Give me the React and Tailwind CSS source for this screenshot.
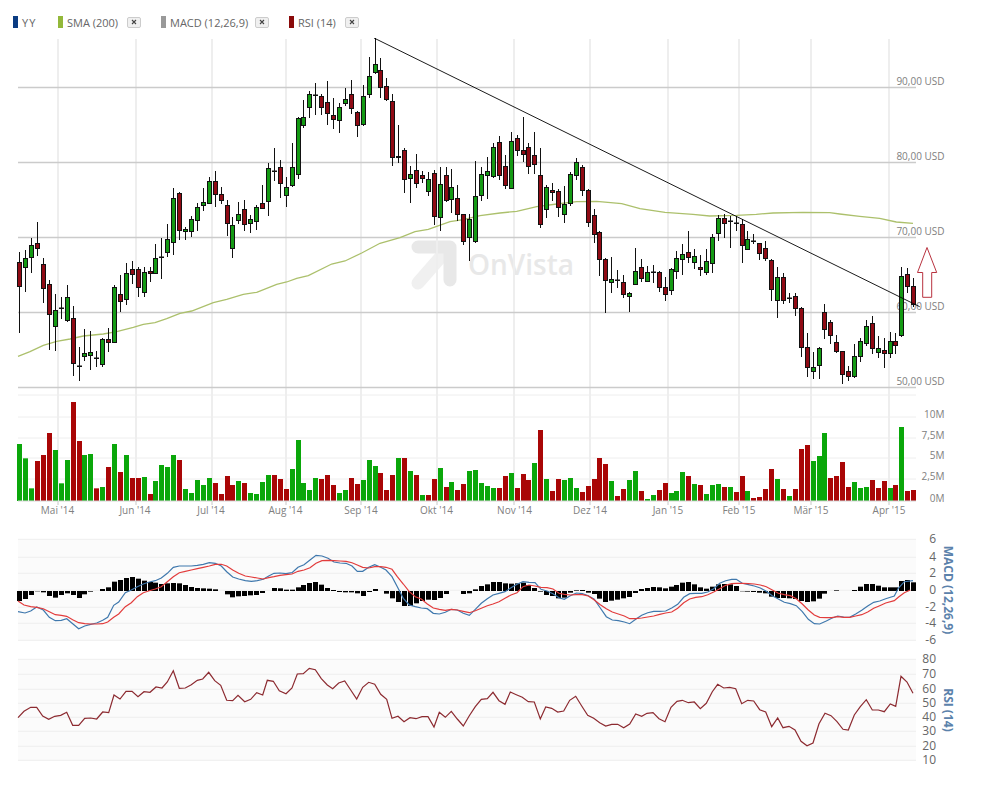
import React from "react";

const FONT = "font-['Open_Sans',sans-serif]";

// high, body top, body bottom, low, colour (pixels on the page)
const candles = [
  [252,262,286,333,"r"],[250,258,267,292,"g"],[238,245,257,273,"g"],[222,243,248,256,"r"],[258,264,288,303,"r"],
  [280,284,314,350,"r"],[294,310,326,351,"g"],[297,308,309,319,"d"],[285,297,320,322,"g"],[306,318,363,376,"r"],
  [347,366,367,381,"d"],[329,353,356,361,"g"],[331,352,355,370,"g"],[351,358,359,367,"d"],[338,339,364,367,"g"],
  [328,339,342,352,"r"],[285,287,342,342,"g"],[275,294,301,312,"r"],[263,273,299,305,"g"],[261,269,274,284,"r"],
  [267,269,287,297,"r"],[267,272,292,297,"g"],[267,271,273,282,"r"],[244,258,273,273,"g"],[238,257,258,279,"d"],
  [224,239,252,257,"g"],[188,198,242,255,"g"],[192,193,230,240,"r"],[227,229,231,240,"g"],[216,219,231,237,"g"],
  [203,207,220,231,"g"],[188,202,205,211,"g"],[177,181,203,203,"g"],[171,181,194,207,"r"],[187,194,200,204,"r"],
  [200,205,223,236,"r"],[217,225,248,258,"g"],[202,214,220,224,"g"],[200,209,224,231,"r"],[215,219,223,233,"g"],
  [205,207,221,230,"g"],[185,203,208,209,"r"],[163,168,201,216,"g"],[148,171,172,181,"d"],[160,167,183,198,"r"],
  [177,187,195,207,"g"],[143,167,185,187,"g"],[117,118,174,179,"g"],[100,117,125,128,"g"],[91,94,107,118,"g"],
  [83,95,96,115,"d"],[94,96,107,115,"r"],[81,102,113,125,"r"],[98,115,119,129,"r"],[103,107,120,133,"g"],
  [88,99,103,106,"g"],[80,94,108,114,"r"],[111,112,125,137,"r"],[85,96,124,126,"g"],[57,76,94,98,"g"],
  [38,64,72,74,"g"],[58,70,87,98,"r"],[78,86,99,101,"r"],[94,101,157,166,"r"],[125,156,157,163,"g"],
  [148,150,179,193,"r"],[166,174,178,203,"g"],[154,170,183,188,"r"],[171,175,178,183,"r"],[172,179,191,196,"g"],
  [170,173,216,225,"r"],[167,184,217,231,"g"],[167,175,200,202,"r"],[169,187,199,213,"g"],[185,198,214,221,"r"],
  [214,214,241,245,"r"],[214,219,237,261,"g"],[161,196,241,243,"g"],[167,174,195,201,"g"],[157,171,175,199,"g"],
  [143,147,176,178,"g"],[136,142,175,180,"r"],[155,166,185,189,"r"],[132,141,188,188,"g"],[135,138,150,156,"r"],
  [117,150,154,162,"r"],[143,147,166,174,"r"],[132,155,164,174,"r"],[148,175,224,228,"r"],[185,187,209,218,"g"],
  [183,190,192,201,"r"],[189,191,207,217,"r"],[186,204,214,223,"g"],[172,174,203,206,"g"],[158,162,175,180,"g"],
  [165,167,190,196,"r"],[189,190,222,227,"r"],[209,215,234,243,"r"],[231,232,259,276,"r"],[258,259,280,313,"r"],
  [257,279,282,293,"g"],[270,280,281,288,"d"],[275,282,294,298,"r"],[292,293,296,312,"g"],[248,271,284,285,"g"],
  [259,267,278,282,"r"],[266,272,281,282,"g"],[265,272,273,283,"d"],[271,272,287,292,"r"],[277,287,294,301,"r"],
  [268,269,290,295,"g"],[251,258,271,279,"g"],[244,254,259,275,"g"],[231,252,257,263,"r"],[249,256,262,269,"g"],
  [255,267,269,276,"r"],[249,261,272,275,"g"],[234,237,263,273,"g"],[215,218,233,241,"g"],[214,218,223,238,"r"],
  [216,221,222,248,"d"],[216,223,224,231,"d"],[219,224,245,263,"r"],[231,239,249,249,"g"],[234,241,242,244,"d"],
  [243,243,253,260,"r"],[241,248,258,261,"r"],[259,260,289,301,"r"],[267,277,300,318,"g"],[273,277,300,304,"r"],
  [293,298,299,303,"d"],[293,296,308,316,"r"],[307,308,347,357,"r"],[333,347,367,377,"r"],[352,367,371,379,"g"],
  [347,348,365,379,"g"],[304,312,329,339,"r"],[320,322,335,344,"r"],[335,342,351,353,"r"],[351,351,374,384,"r"],
  [366,371,376,381,"r"],[344,356,376,378,"g"],[338,341,356,362,"g"],[320,326,343,346,"g"],[316,323,348,354,"r"],
  [336,348,352,358,"g"],[338,350,353,368,"r"],[332,341,353,358,"g"],[333,341,345,354,"r"],[267,276,335,337,"g"],
  [268,274,286,293,"r"],[278,286,304,307,"r"],
];

// volume bar tops, read off a 3x crop: y = 395 + v / 3
const volume = [
  [147,"g"],[190,"g"],[280,"g"],[198,"r"],[180,"r"],[114,"r"],[165,"g"],[265,"g"],[195,"g"],[21,"r"],
  [138,"r"],[180,"g"],[177,"g"],[280,"r"],[276,"g"],[216,"r"],[147,"g"],[231,"r"],[180,"g"],[249,"r"],
  [249,"r"],[246,"g"],[297,"r"],[258,"g"],[210,"g"],[216,"g"],[180,"g"],[195,"r"],[282,"g"],[294,"g"],
  [255,"g"],[270,"g"],[249,"g"],[264,"r"],[297,"r"],[243,"r"],[270,"r"],[258,"g"],[264,"r"],[294,"g"],
  [297,"g"],[261,"g"],[240,"g"],[240,"r"],[252,"r"],[282,"r"],[222,"g"],[135,"g"],[264,"g"],[285,"g"],
  [249,"g"],[252,"r"],[240,"r"],[270,"r"],[294,"g"],[285,"g"],[249,"r"],[267,"r"],[255,"g"],[195,"g"],
  [213,"g"],[234,"r"],[285,"r"],[240,"r"],[189,"g"],[189,"r"],[228,"g"],[240,"r"],[300,"g"],[300,"r"],
  [252,"r"],[219,"g"],[276,"r"],[261,"g"],[285,"r"],[267,"r"],[228,"g"],[225,"g"],[264,"g"],[273,"g"],
  [279,"g"],[279,"r"],[243,"r"],[234,"g"],[279,"r"],[237,"r"],[255,"r"],[204,"g"],[105,"r"],[252,"g"],
  [288,"r"],[252,"r"],[255,"g"],[249,"g"],[279,"g"],[291,"r"],[273,"r"],[252,"r"],[189,"r"],[207,"r"],
  [258,"g"],[303,"r"],[282,"r"],[255,"g"],[228,"g"],[288,"r"],[312,"g"],[300,"g"],[285,"r"],[264,"r"],
  [294,"g"],[288,"g"],[231,"g"],[243,"r"],[267,"g"],[270,"r"],[297,"g"],[270,"g"],[267,"g"],[276,"r"],
  [276,"g"],[291,"r"],[243,"r"],[288,"g"],[309,"r"],[306,"r"],[282,"r"],[222,"r"],[252,"g"],[282,"r"],
  [303,"g"],[282,"r"],[162,"r"],[150,"r"],[198,"g"],[183,"g"],[114,"g"],[249,"r"],[243,"r"],[201,"r"],
  [276,"r"],[261,"g"],[279,"g"],[276,"g"],[255,"r"],[279,"r"],[258,"r"],[279,"g"],[270,"r"],[96,"g"],
  [288,"r"],[285,"r"],
];

// macd histogram, 183 is the zero line of the crop
const histogram = [
  213,207,195,184,187,198,203,195,190,195,204,193,185,183,177,172,155,150,144,141,
  146,152,156,158,162,160,159,160,165,171,174,175,176,178,183,193,202,199,198,196,
  195,189,183,174,175,179,179,172,165,159,156,164,174,180,186,187,187,190,198,186,
  177,183,191,205,216,228,228,220,213,209,210,204,192,183,183,192,190,178,168,163,
  156,156,160,161,160,158,165,174,185,195,198,205,203,188,181,180,188,192,206,216,
  212,209,205,201,189,177,174,171,172,175,170,165,158,156,163,172,176,170,163,162,
  163,168,184,185,186,188,190,200,204,204,205,207,213,216,214,206,191,183,181,183,
  183,180,170,162,162,167,172,172,172,153,150,157,
];

const macdBlue = [[54,245],[75,249],[92,243],[110,231],[130,240],[148,262],[166,272],[184,271],[200,266],[218,281],[236,296],[254,288],[272,283],[290,279],[308,271],[323,262],[341,226],[356,216],[376,188],[394,180],[412,170],[430,162],[448,156],[466,152],[484,144],[502,130],[520,112],[538,108],[556,108],[574,108],[592,106],[610,103],[628,98],[646,100],[664,108],[680,125],[698,141],[716,147],[736,152],[754,154],[772,152],[790,148],[806,138],[822,130],[840,129],[858,131],[876,128],[894,112],[912,104],[930,90],[948,76],[966,78],[984,85],[1002,96],[1020,99],[1038,100],[1056,108],[1072,124],[1088,124],[1106,112],[1124,104],[1142,112],[1158,120],[1176,140],[1192,170],[1210,205],[1228,225],[1246,230],[1264,234],[1282,236],[1300,250],[1318,252],[1336,247],[1354,238],[1372,240],[1390,250],[1408,256],[1426,238],[1444,220],[1462,206],[1479,195],[1497,190],[1515,185],[1533,173],[1551,163],[1569,155],[1587,157],[1605,158],[1623,178],[1641,183],[1659,191],[1677,203],[1693,208],[1711,197],[1729,189],[1747,191],[1765,197],[1783,208],[1801,234],[1819,260],[1837,270],[1855,272],[1873,276],[1889,281],[1907,268],[1925,256],[1943,248],[1961,244],[1979,244],[1997,243],[2015,234],[2033,223],[2051,202],[2069,191],[2087,190],[2105,190],[2123,186],[2141,176],[2159,160],[2177,152],[2195,148],[2209,148],[2227,160],[2245,164],[2263,168],[2281,174],[2299,184],[2317,197],[2335,207],[2353,217],[2371,221],[2389,227],[2407,245],[2425,268],[2443,281],[2459,282],[2479,273],[2495,265],[2513,258],[2531,261],[2549,262],[2567,252],[2585,241],[2603,228],[2621,217],[2639,213],[2657,206],[2683,198],[2695,175],[2713,155],[2739,152]];

const macdRed = [[54,213],[72,225],[92,230],[110,232],[130,236],[148,245],[166,254],[184,256],[200,259],[218,269],[236,278],[254,281],[272,282],[290,282],[308,281],[323,276],[341,262],[356,252],[376,230],[394,218],[412,200],[430,188],[448,182],[466,177],[484,170],[502,155],[520,140],[538,128],[556,124],[574,120],[592,116],[610,112],[628,108],[646,103],[664,103],[680,108],[698,120],[716,130],[736,138],[754,141],[772,144],[790,147],[806,143],[822,140],[840,136],[858,134],[876,132],[894,124],[912,120],[930,113],[948,100],[966,92],[984,91],[1002,92],[1020,93],[1038,94],[1056,98],[1072,105],[1088,112],[1106,114],[1124,110],[1142,110],[1158,112],[1176,118],[1192,140],[1210,162],[1228,185],[1246,200],[1264,207],[1282,222],[1300,234],[1318,238],[1336,241],[1354,238],[1372,240],[1390,244],[1408,248],[1426,242],[1444,235],[1462,227],[1479,222],[1497,215],[1515,205],[1533,195],[1551,188],[1569,170],[1587,165],[1605,168],[1623,172],[1641,173],[1659,177],[1677,190],[1693,193],[1711,195],[1729,194],[1747,194],[1765,198],[1783,210],[1801,224],[1819,236],[1837,246],[1855,252],[1873,258],[1889,266],[1907,266],[1925,264],[1943,261],[1961,258],[1979,253],[1997,249],[2015,246],[2033,235],[2051,218],[2069,207],[2087,202],[2105,200],[2123,194],[2141,186],[2159,176],[2177,166],[2195,161],[2209,160],[2227,160],[2245,161],[2263,162],[2281,165],[2299,170],[2317,180],[2335,190],[2353,194],[2371,197],[2389,206],[2407,222],[2425,240],[2443,255],[2459,262],[2479,263],[2495,263],[2513,260],[2531,262],[2549,262],[2567,258],[2585,254],[2603,246],[2621,235],[2639,227],[2657,219],[2683,212],[2695,202],[2713,188],[2731,180]];

const rsiLine = [[54,203],[72,184],[92,172],[110,172],[128,198],[146,208],[164,199],[182,196],[200,187],[218,226],[236,226],[254,205],[272,204],[290,207],[308,186],[326,188],[342,135],[360,147],[378,124],[396,124],[414,140],[432,125],[450,127],[468,111],[486,114],[502,96],[520,62],[538,115],[556,114],[574,104],[592,91],[608,87],[626,67],[644,92],[662,106],[680,151],[698,152],[714,136],[734,155],[752,148],[770,128],[788,135],[802,91],[820,94],[838,122],[858,131],[876,114],[892,72],[910,71],[928,55],[946,59],[964,86],[982,105],[998,116],[1016,99],[1034,93],[1052,120],[1070,147],[1088,112],[1106,97],[1124,103],[1142,133],[1160,148],[1176,205],[1194,199],[1212,215],[1230,203],[1248,206],[1266,200],[1284,200],[1302,231],[1318,187],[1336,202],[1354,184],[1372,207],[1390,228],[1408,197],[1426,170],[1444,148],[1462,146],[1479,127],[1497,152],[1515,163],[1531,126],[1549,134],[1567,142],[1585,155],[1603,156],[1621,207],[1637,171],[1655,175],[1673,186],[1691,183],[1709,151],[1727,139],[1745,168],[1763,196],[1781,205],[1799,218],[1817,228],[1835,223],[1853,223],[1871,233],[1889,222],[1907,192],[1925,199],[1941,190],[1959,188],[1977,206],[1995,215],[2013,172],[2031,154],[2047,151],[2065,158],[2083,156],[2101,176],[2119,160],[2137,125],[2153,103],[2171,114],[2189,112],[2207,116],[2225,161],[2243,151],[2261,153],[2279,179],[2297,186],[2315,230],[2333,204],[2349,233],[2367,229],[2385,240],[2403,274],[2421,287],[2439,279],[2457,221],[2475,190],[2493,197],[2511,215],[2529,238],[2545,240],[2563,195],[2581,170],[2599,149],[2617,180],[2635,180],[2653,185],[2671,162],[2687,169],[2703,79],[2721,96],[2739,130]];

const smaLine = [[18,356.3],[30,351.7],[43.3,345.3],[56.7,341.3],[70,339],[83.3,336],[103.3,334],[116.7,331.7],[133.3,327.3],[143.3,324.3],[155,322.7],[166.7,318.7],[180,313.3],[191.7,311],[213.3,302.7],[226.7,299.3],[243.3,294.3],[256.7,292.3],[276.7,284.3],[286.7,282],[296.7,278.3],[308.3,275.7],[331.7,264],[345,261],[361.7,253],[380,243.3],[400,237.7],[415,231.7],[428.3,229.3],[450,221.7],[463.3,219.7],[480,215.7],[500,213],[516.7,211.3],[536.7,206.7],[556.7,204],[576.7,201.7],[596.7,201.3],[621.7,203.7],[640,208.7],[665,212.3],[693,214.3],[709.7,216],[736.3,215.3],[756.3,214.3],[773,213],[803,212.3],[829.7,212.7],[839.7,214],[859.7,216.3],[879.7,218.3],[896.3,222],[913,223.3]];

const monthGrid = [58, 136, 212, 286, 361, 437, 514, 590, 668, 739, 811, 889];
const months = [
  ["Mai '14", 57.5], ["Jun '14", 135], ["Jul '14", 211], ["Aug '14", 285.5], ["Sep '14", 361], ["Okt '14", 436.5],
  ["Nov '14", 514.5], ["Dez '14", 590], ["Jan '15", 668], ["Feb '15", 739], ["Mär '15", 811], ["Apr '15", 889],
];
const prices = [["90,00 USD", 87.5], ["80,00 USD", 162.5], ["70,00 USD", 237.5], ["60,00 USD", 312.5], ["50,00 USD", 387.5]];
const volumes = [["10M", 417], ["7,5M", 438], ["5M", 458], ["2,5M", 479], ["0M", 501]];

const barX = (i) => Math.round(19.3 + 5.92 * i);
const points = (list) => list.map((p) => p.join(",")).join(" ");
// the crops were read at 3x, this puts those numbers back on the panel
const fromCrop = (list, top) => list.map(([x, y]) => [(x / 3).toFixed(1), (top + y / 3).toFixed(1)]);

const Candle = ({ c, i }) => {
  const [high, top, bottom, low, color] = c;
  const x = barX(i);
  const fill = color === "g" ? "#149a14" : "#8f0a14";
  return (
    <g>
      <line x1={x + 0.5} x2={x + 0.5} y1={high} y2={low} stroke="#111" strokeWidth="1" />
      {color === "d" ? (
        <rect x={x - 2} y={top - 0.5} width="5" height="1.5" fill="#111" />
      ) : (
        <rect x={x - 1.5} y={top + 0.5} width="4" height={Math.max(bottom - top, 1)} fill={fill} stroke="#111" strokeWidth="1" />
      )}
    </g>
  );
};

const LegendItem = ({ color, label, width, closable }) => (
  <div className="flex items-center">
    <span className="h-[12px] w-[5px]" style={{ backgroundColor: color }} />
    <span className={`ml-[4px] whitespace-nowrap text-[11px] leading-none text-[#666] ${width} ${FONT}`}>{label}</span>
    {closable && (
      <button className="ml-[8px] flex h-[11px] w-[14px] items-center justify-center rounded-[2px] border border-[#ccc] bg-[#f0f0f0]">
        <svg width="6" height="6" viewBox="0 0 6 6">
          <path d="M1 1 L5 5 M5 1 L1 5" stroke="#444" strokeWidth="1.1" />
        </svg>
      </button>
    )}
  </div>
);

const PricePanel = () => (
  <svg width="993" height="482" viewBox="0 38 993 482" className={`block ${FONT}`}>
    {/* watermark */}
    <g stroke="#e8e8e8" strokeLinecap="round" fill="none">
      <path d="M418 283 L446 251" stroke="#f0f0f0" strokeWidth="13" />
      <path d="M418 247 L450 247 L450 280" strokeWidth="13" strokeLinejoin="round" />
    </g>
    <text x="468" y="275" className="fill-[#e8e8e8] text-[28px] font-semibold">OnVista</text>

    {monthGrid.map((x) => (
      <g key={x}>
        <line x1={x} x2={x} y1="39" y2="501" stroke="#eeeeee" strokeWidth="2" />
        <line x1={x} x2={x} y1="501" y2="505" stroke="#c8c8c8" />
      </g>
    ))}
    {prices.map(([label, y]) => (
      <g key={label}>
        <line x1="18" x2="916" y1={y} y2={y} stroke="#cbcbcb" strokeWidth="1.5" />
        <text x="944.5" y={y - 2.5} textAnchor="end" className="fill-[#808080] text-[10px]">{label}</text>
      </g>
    ))}
    <line x1="18" x2="916" y1="395" y2="395" stroke="#eeeeee" />

    <polyline points={points(smaLine)} fill="none" stroke="#acc06c" strokeWidth="1.3" />
    {candles.map((c, i) => <Candle key={i} c={c} i={i} />)}
    <line x1="374" y1="38" x2="919.7" y2="306.7" stroke="#000" strokeWidth="0.9" />
    <path d="M927 247.5 L917.5 272.5 L922.7 272.5 L922.7 297.3 L931.7 297.3 L931.7 272.5 L936.7 272.5 Z" fill="none" stroke="#b8323f" strokeWidth="1" />

    {volumes.map(([label, y]) => (
      <g key={label}>
        {label !== "0M" && <line x1="18" x2="916" y1={y} y2={y} stroke="#eeeeee" />}
        <text x="944.5" y={y + 0.5} textAnchor="end" className="fill-[#808080] text-[10px]">{label}</text>
      </g>
    ))}
    {volume.map(([top, color], i) => {
      const y = 395 + top / 3;
      return <rect key={i} x={barX(i) - 2} y={y} width="5" height={501 - y} fill={color === "g" ? "#0aa70a" : "#a90606"} />;
    })}
    <line x1="18" x2="916" y1="501" y2="501" stroke="#d6d6d6" />
    {months.map(([label, x]) => (
      <text key={label} x={x} y="514" textAnchor="middle" className="fill-[#808080] text-[10px]">{label}</text>
    ))}
  </svg>
);

const Indicator = ({ top, lines, labels, title, titleY, children }) => (
  <svg width="993" height="120" viewBox={`0 ${top} 993 120`} className={`block ${FONT}`}>
    <rect x="18" y={top + 9.3} width="898" height="101" fill="#fbfbfb" />
    {lines.map((y) => (
      <line key={y} x1="18" x2="916" y1={top + y / 3} y2={top + y / 3} stroke="#eeeeee" />
    ))}
    {labels.map((label, i) => (
      <text key={label} x="936" y={top + lines[i] / 3 + 4} textAnchor="end" className="fill-[#666] text-[12px]">{label}</text>
    ))}
    {children}
    <text transform={`rotate(90 944 ${titleY})`} x="944" y={titleY} textAnchor="middle" className="fill-[#5b82ab] text-[12px] font-bold">{title}</text>
  </svg>
);

export default function App() {
  return (
    <div className="flex h-[798px] w-[993px] flex-col bg-white">
      <div className="flex h-[38px] items-start gap-[20px] pl-[13px] pt-[16px]">
        <LegendItem color="#0b3c82" label="YY" width="w-[16px] tracking-[1px]" />
        <LegendItem color="#93b83a" label="SMA (200)" width="w-[52px]" closable />
        <LegendItem color="#999999" label="MACD (12,26,9)" width="w-[77px]" closable />
        <LegendItem color="#8a0a0a" label="RSI (14)" width="w-[39px]" closable />
      </div>
      <PricePanel />
      <div className="mt-[10px]">
        <Indicator top={530} lines={[28, 82, 130, 181, 232, 280, 331]} labels={["6", "4", "2", "0", "-2", "-4", "-6"]} title="MACD (12,26,9)" titleY={590}>
          {histogram.map((v, i) => {
            const y = 530 + Math.min(v, 183) / 3;
            const h = Math.abs(v - 183) / 3;
            return h > 0 && <rect key={i} x={barX(i) - 2} y={y} width="5" height={h} fill="#000" />;
          })}
          <polyline points={points(fromCrop(macdBlue, 530))} fill="none" stroke="#3f78ad" strokeWidth="1.2" />
          <polyline points={points(fromCrop(macdRed, 530))} fill="none" stroke="#e23c3c" strokeWidth="1.2" />
        </Indicator>
        <Indicator top={650} lines={[28, 73, 118, 160, 202, 244, 289, 331]} labels={["80", "70", "60", "50", "40", "30", "20", "10"]} title="RSI (14)" titleY={710}>
          <polyline points={points(fromCrop(rsiLine, 650))} fill="none" stroke="#8c2a30" strokeWidth="1.2" />
        </Indicator>
      </div>
    </div>
  );
}
